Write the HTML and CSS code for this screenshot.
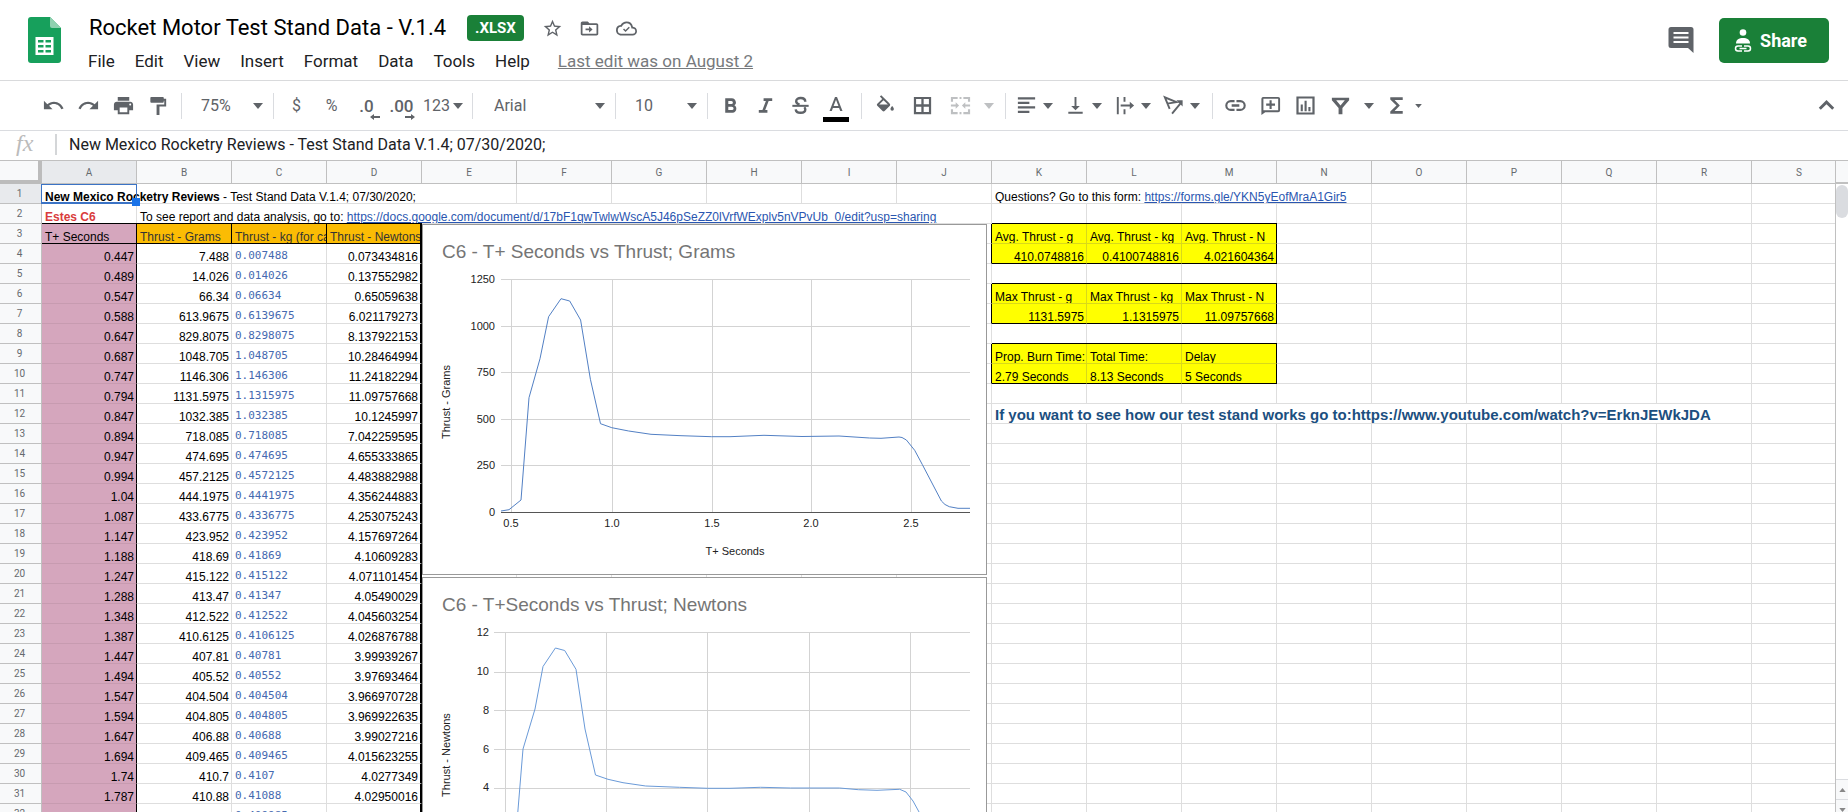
FILE: index.html
```html
<!DOCTYPE html>
<html lang="en">
<head>
<meta charset="utf-8">
<title>Rocket Motor Test Stand Data - V.1.4</title>
<link rel="stylesheet" href="styles.css">
</head>
<body>
<svg class="defs" aria-hidden="true">
  <symbol id="caret" viewBox="0 0 10 6"><path d="M0 0h10L5 6z"/></symbol>
</svg>
<header class="top">
  <svg class="logo" viewBox="0 0 33 46" aria-label="Sheets"><path fill="#17a05c" d="M3 0h19l11 11v32a3 3 0 0 1-3 3H3a3 3 0 0 1-3-3V3a3 3 0 0 1 3-3z"/><path fill="#8fd1b0" d="M22 0l11 11H24a2 2 0 0 1-2-2z"/><path fill="#fff" fill-rule="evenodd" d="M7.500 20h18v18h-18zM10 23v2.500h5.500V23zm7.500 0v2.500H23V23zM10 28v2.500h5.500V28zm7.500 0v2.500H23V28zM10 33v2.500h5.500V33zm7.500 0v2.500H23V33z"/></svg>
  <div class="doc">
    <div class="title-row">
      <h1 class="title">Rocket Motor Test Stand Data - V.1.4</h1>
      <span class="badge">.XLSX</span>
      <button class="mini" aria-label="Star"><svg viewBox="0 0 24 24"><path d="M22 9.240l-7.190-.620L12 2 9.190 8.630 2 9.240l5.460 4.730L5.820 21 12 17.270 18.180 21l-1.630-7.030zM12 15.400l-3.760 2.270 1-4.280-3.320-2.880 4.380-.380L12 6.100l1.710 4.040 4.380.380-3.320 2.880 1 4.280z"/></svg></button>
      <button class="mini" aria-label="Move"><svg viewBox="0 0 24 24"><path d="M20 6h-8l-2-2H4c-1.100 0-2 .9-2 2v12c0 1.100.9 2 2 2h16c1.100 0 2-.9 2-2V8c0-1.100-.9-2-2-2zm0 12H4V8h16zM11.500 9.500l4 3.500-4 3.500v-2.600H7.500v-1.800h4z"/></svg></button>
      <button class="mini" aria-label="Saved"><svg viewBox="0 0 24 24"><path d="M19.350 10.040A7.490 7.490 0 0 0 12 4C9.110 4 6.600 5.640 5.350 8.040A5.994 5.994 0 0 0 0 14c0 3.310 2.690 6 6 6h13c2.760 0 5-2.240 5-5 0-2.640-2.050-4.780-4.650-4.960zM19 18H6a4 4 0 0 1-.4-7.970l1.070-.110.500-.950A5.469 5.469 0 0 1 12 6c2.620 0 4.880 1.860 5.390 4.430l.3 1.500 1.530.110A2.980 2.980 0 0 1 19 18zM10.900 13.700l-1.700-1.700-1.200 1.200 2.900 2.900 4.900-4.900-1.200-1.200z"/></svg></button>
    </div>
    <nav class="menus">
      <button>File</button><button>Edit</button><button>View</button><button>Insert</button><button>Format</button><button>Data</button><button>Tools</button><button>Help</button>
      <a class="last-edit" href="#">Last edit was on August 2</a>
    </nav>
  </div>
  <button class="comments" aria-label="Comments"><svg viewBox="0 0 26 26"><path fill-rule="evenodd" d="M3 0h20a2.500 2.500 0 0 1 2.500 2.500V26L20 21H3a2.500 2.500 0 0 1-2.500-2.500v-16A2.500 2.500 0 0 1 3 0zm2.500 5v2h15V5zm0 4.500v2h15v-2zm0 4.500v2h15v-2z"/></svg></button>
  <button class="share"><svg viewBox="0 0 18 23"><circle cx="9" cy="3.500" r="3.300"/><path d="M2 14.500c0-4 3-5.500 7-5.500s7 1.500 7 5.500z"/><path fill="none" stroke="#fff" stroke-width="1.500" d="M8 17H4a2.500 2.500 0 0 0 0 5h4M10 17h4a2.500 2.500 0 0 1 0 5h-4M5.500 19.500h7"/></svg>Share</button>
</header>

<div class="toolbar">
  <button class="tool" aria-label="Undo"><svg viewBox="0 0 24 24"><path d="M12.500 8c-2.650 0-5.050.99-6.900 2.600L2 7v9h9l-3.620-3.620c1.390-1.160 3.160-1.880 5.120-1.880 3.540 0 6.550 2.310 7.600 5.500l2.370-.780C21.080 11.030 17.150 8 12.500 8z"/></svg></button>
  <button class="tool" aria-label="Redo"><svg viewBox="0 0 24 24"><path d="M11.500 8c2.650 0 5.050.99 6.900 2.600L22 7v9h-9l3.620-3.620c-1.390-1.160-3.160-1.880-5.120-1.880-3.540 0-6.550 2.310-7.600 5.500l-2.370-.780C2.920 11.030 6.850 8 11.500 8z"/></svg></button>
  <button class="tool" aria-label="Print"><svg viewBox="0 0 24 24"><path d="M19 8H5c-1.660 0-3 1.340-3 3v6h4v4h12v-4h4v-6c0-1.660-1.340-3-3-3zm-3 11H8v-5h8v5zm3-7c-.55 0-1-.45-1-1s.45-1 1-1 1 .45 1 1-.45 1-1 1zm-1-9H6v4h12V3z"/></svg></button>
  <button class="tool" aria-label="Paint format"><svg viewBox="0 0 24 24"><path d="M4.500 3h12a1 1 0 0 1 1 1v1H20v8h-7v9h-3V11h8V7h-.5v1a1 1 0 0 1-1 1h-12a1 1 0 0 1-1-1V4a1 1 0 0 1 1-1z"/></svg></button>
  <span class="sep"></span>
  <label class="pick pick-short"><select aria-label="Zoom"><option>75%</option></select><svg class="caret"><use href="#caret"/></svg></label>
  <span class="sep"></span>
  <button class="tool text">$</button>
  <button class="tool text">%</button>
  <button class="tool text dec" aria-label="Decrease decimal places"><b>.0</b><svg viewBox="0 0 10 6"><path d="M0 3l4-3v2h6v2H4v2z"/></svg></button>
  <button class="tool text dec" aria-label="Increase decimal places"><b>.00</b><svg viewBox="0 0 10 6"><path d="M10 3L6 0v2H0v2h6v2z"/></svg></button>
  <button class="tool text formats">123<svg class="caret"><use href="#caret"/></svg></button>
  <span class="sep"></span>
  <label class="pick pick-long"><select aria-label="Font"><option>Arial</option></select><svg class="caret"><use href="#caret"/></svg></label>
  <span class="sep"></span>
  <label class="pick pick-short"><select aria-label="Font size"><option>10</option></select><svg class="caret"><use href="#caret"/></svg></label>
  <span class="sep"></span>
  <button class="tool" aria-label="Bold"><svg viewBox="0 0 24 24"><path d="M16 11.790c1-.7 1.700-1.800 1.700-2.790C17.700 6.500 15.800 4.500 13.300 4.500H6.500v15h7.600c2.300 0 4-1.900 4-4.200 0-1.600-.9-2.900-2.100-3.510zM9.700 7.200h3.200a1.600 1.600 0 0 1 0 3.200H9.700zm3.700 9.600H9.700v-3.600h3.700a1.800 1.800 0 0 1 0 3.600z"/></svg></button>
  <button class="tool" aria-label="Italic"><svg viewBox="0 0 24 24"><path d="M10 4.500v2.700h2.400l-3.600 9.600H5v2.700h9v-2.700h-2.300l3.600-9.600H19V4.500z"/></svg></button>
  <button class="tool" aria-label="Strikethrough"><svg viewBox="0 0 24 24"><path fill="none" stroke="#5f6368" stroke-width="2.500" d="M17 8c0-5-9.500-5-9.500-.5 0 2 1.500 3 3.500 3.700M7 16c.5 5 10 4.500 10 .2 0-1-.5-1.900-1-2.400"/><path d="M3.500 11.300h17v2.100h-17z"/></svg></button>
  <button class="tool color" aria-label="Text color"><svg viewBox="0 0 24 24"><path d="M11 5L5.500 19h2.300l1.100-3h6.200l1.100 3h2.300L13 5zm-1.400 9L12 7.700l2.400 6.300z"/></svg><i class="swatch"></i></button>
  <span class="sep sep-late"></span>
  <button class="tool" aria-label="Fill color"><svg viewBox="0 0 24 24"><path d="M16.600 9.200L8.600 1.300 7.200 2.700l2.400 2.400-5.100 5.100c-.6.600-.6 1.500 0 2.100l5.500 5.500c.6.600 1.500.6 2.100 0l5.500-5.500c.3-.3.300-.8.300-1.500zM6.500 11L11 6.500l4.500 4.500zM20 12.500s-1.800 2-1.800 3.200a1.800 1.800 0 0 0 3.600 0c0-1.200-1.800-3.200-1.800-3.200z"/></svg></button>
  <button class="tool tool-wide" aria-label="Borders"><svg viewBox="0 0 24 24"><path fill-rule="evenodd" d="M3 3h18v18H3zm2.300 2.300v5.500h5.500V5.300zm7.900 0v5.500h5.500V5.300zM5.300 13.200v5.500h5.500v-5.500zm7.900 0v5.500h5.500v-5.500z"/></svg></button>
  <button class="tool off" aria-label="Merge cells"><svg viewBox="0 0 24 24"><path d="M2 3h7v2.200H4.200V8H2zm13 0h7v5h-2.200V5.200H15zM2 16h2.200v2.800H9V21H2zm17.800 0H22v5h-7v-2.200h4.800zM11 3h2v2.200h-2zm0 15.800h2V21h-2zM2 11h5V8.500l3.500 3.500L7 15.500V13H2zm20 0h-5V8.500L13.500 12l3.500 3.500V13h5z"/></svg></button>
  <button class="drop drop-mid off" aria-label="Merge options"><svg class="caret"><use href="#caret"/></svg></button>
  <span class="sep"></span>
  <button class="split" aria-label="Horizontal align"><svg viewBox="0 0 24 24"><path d="M3 3.500h18v2.300H3zm0 4.700h12v2.300H3zm0 4.700h18v2.300H3zm0 4.700h12v2.300H3z"/></svg><svg class="caret"><use href="#caret"/></svg></button>
  <button class="split" aria-label="Vertical align"><svg viewBox="0 0 24 24"><path d="M11 3h2v9.500h3.500L12 17l-4.500-4.500H11zM4.500 18.500h15v2.200h-15z"/></svg><svg class="caret"><use href="#caret"/></svg></button>
  <button class="split" aria-label="Text wrapping"><svg viewBox="0 0 24 24"><path d="M4 3h2v18H4zm7 0h2v5h-2zm0 13h2v5h-2zM8 11h9.500V8l4.500 4-4.500 4v-3H8z"/></svg><svg class="caret"><use href="#caret"/></svg></button>
  <button class="split" aria-label="Text rotation"><svg viewBox="0 0 24 24"><path fill="none" stroke="#5f6368" stroke-width="2" d="M8 15.500L3 3.500l12 5L5.500 10M10.500 20.500L20 9"/><path d="M15 6.500h6.500V13z"/></svg><svg class="caret"><use href="#caret"/></svg></button>
  <span class="sep"></span>
  <button class="tool" aria-label="Insert link"><svg viewBox="0 0 24 24"><path d="M3.500 12A3.500 3.500 0 0 1 7 8.500h4V6.300H7a5.700 5.700 0 0 0 0 11.400h4v-2.200H7A3.500 3.500 0 0 1 3.500 12zM8 13.200h8v-2.400H8zM17 6.300h-4v2.200h4a3.500 3.500 0 0 1 0 7h-4v2.200h4a5.700 5.700 0 0 0 0-11.400z"/></svg></button>
  <button class="tool" aria-label="Insert comment"><svg viewBox="0 0 24 24"><path fill-rule="evenodd" d="M4 3h16a2 2 0 0 1 2 2v12a2 2 0 0 1-2 2H6.500L2.500 22V5A2 2 0 0 1 4 3zm.6 2v12H20V5zM11 6.500h2.200V10h3.500v2.200h-3.500v3.500H11v-3.500H7.500V10H11z"/></svg></button>
  <button class="tool" aria-label="Insert chart"><svg viewBox="0 0 24 24"><path fill-rule="evenodd" d="M2.500 2.500h19v19h-19zm2.300 2.300v14.400h14.400V4.800zM7 11h2.200v7H7zm4-4h2.200v11H11zm4 6.500h2.200V18H15z"/></svg></button>
  <button class="tool" aria-label="Filter"><svg viewBox="0 0 24 24"><path fill-rule="evenodd" d="M3 4h18v2.400L14 14.500V21h-4v-6.500L3 6.400zm4.500 2.500L12 12l4.500-5.500z"/></svg></button>
  <button class="drop drop-mid" aria-label="Filter views"><svg class="caret"><use href="#caret"/></svg></button>
  <button class="tool tool-slim" aria-label="Functions"><svg viewBox="0 0 24 24"><path d="M18.500 3.500H5.500v2.200L12 12l-6.500 6.300v2.200h13v-2.800H10L15.500 12 10 6.300h8.500z"/></svg></button>
  <button class="drop" aria-label="More functions"><svg class="caret caret-small"><use href="#caret"/></svg></button>
  <button class="tool collapse" aria-label="Hide the menus"><svg viewBox="0 0 24 24"><path fill="none" stroke="#5f6368" stroke-width="3" d="M5 15.500l7-7 7 7"/></svg></button>
</div>

<div class="formula">
  <span class="fx">fx</span>
  <input class="formula-input" aria-label="Formula" value="New Mexico Rocketry Reviews - Test Stand Data V.1.4; 07/30/2020;">
</div>

<main class="sheet">
  <div class="grid">
    <table>
      <colgroup><col class="num"><col span="19"></colgroup>
      <thead><tr><th class="corner"></th><th class="sel">A</th><th>B</th><th>C</th><th>D</th><th>E</th><th>F</th><th>G</th><th>H</th><th>I</th><th>J</th><th>K</th><th>L</th><th>M</th><th>N</th><th>O</th><th>P</th><th>Q</th><th>R</th><th>S</th></tr></thead>
      <tbody class="plain">
        <tr><th class="sel">1</th><td colspan="5"><b>New Mexico Rocketry Reviews</b> - Test Stand Data V.1.4; 07/30/2020;</td><td class="blank" colspan="5"></td><td colspan="4">Questions? Go to this form: <a href="#">https://forms.gle/YKN5yEofMraA1Gir5</a></td><td class="blank" colspan="5"></td></tr>
        <tr><th>2</th><td class="engine">Estes C6</td><td colspan="9">To see report and data analysis, go to: <a href="#">https://docs.google.com/document/d/17bF1qwTwlwWscA5J46pSeZZ0lVrfWExplv5nVPvUb_0/edit?usp=sharing</a></td><td class="blank" colspan="9"></td></tr>
      </tbody>
      <tbody class="data">
        <tr class="heads"><th>3</th><td>T+ Seconds</td><td>Thrust - Grams</td><td>Thrust - kg (for calc)</td><td>Thrust - Newtons</td><td class="blank edge" colspan="6"></td><td class="y t">Avg. Thrust - g</td><td class="y t">Avg. Thrust - kg</td><td class="y t r">Avg. Thrust - N</td><td class="blank" colspan="6"></td></tr>
        <tr><th>4</th><td>0.447</td><td>7.488</td><td>0.007488</td><td>0.073434816</td><td class="blank edge" colspan="6"></td><td class="y n b">410.0748816</td><td class="y n b">0.4100748816</td><td class="y n b r">4.021604364</td><td class="blank" colspan="6"></td></tr>
        <tr><th>5</th><td>0.489</td><td>14.026</td><td>0.014026</td><td>0.137552982</td><td class="blank" colspan="15"></td></tr>
        <tr><th>6</th><td>0.547</td><td>66.34</td><td>0.06634</td><td>0.65059638</td><td class="blank edge" colspan="6"></td><td class="y t">Max Thrust - g</td><td class="y t">Max Thrust - kg</td><td class="y t r">Max Thrust - N</td><td class="blank" colspan="6"></td></tr>
        <tr><th>7</th><td>0.588</td><td>613.9675</td><td>0.6139675</td><td>6.021179273</td><td class="blank edge" colspan="6"></td><td class="y n b">1131.5975</td><td class="y n b">1.1315975</td><td class="y n b r">11.09757668</td><td class="blank" colspan="6"></td></tr>
        <tr><th>8</th><td>0.647</td><td>829.8075</td><td>0.8298075</td><td>8.137922153</td><td class="blank" colspan="15"></td></tr>
        <tr><th>9</th><td>0.687</td><td>1048.705</td><td>1.048705</td><td>10.28464994</td><td class="blank edge" colspan="6"></td><td class="y t">Prop. Burn Time:</td><td class="y t">Total Time:</td><td class="y t r">Delay</td><td class="blank" colspan="6"></td></tr>
        <tr><th>10</th><td>0.747</td><td>1146.306</td><td>1.146306</td><td>11.24182294</td><td class="blank edge" colspan="6"></td><td class="y b">2.79 Seconds</td><td class="y b">8.13 Seconds</td><td class="y b r">5 Seconds</td><td class="blank" colspan="6"></td></tr>
        <tr><th>11</th><td>0.794</td><td>1131.5975</td><td>1.1315975</td><td>11.09757668</td><td class="blank" colspan="15"></td></tr>
        <tr><th>12</th><td>0.847</td><td>1032.385</td><td>1.032385</td><td>10.1245997</td><td class="blank" colspan="6"></td><td class="note" colspan="8">If you want to see how our test stand works go to:https://www.youtube.com/watch?v=ErknJEWkJDA</td><td class="blank"></td></tr>
        <tr><th>13</th><td>0.894</td><td>718.085</td><td>0.718085</td><td>7.042259595</td><td class="blank" colspan="15"></td></tr>
        <tr><th>14</th><td>0.947</td><td>474.695</td><td>0.474695</td><td>4.655333865</td><td class="blank" colspan="15"></td></tr>
        <tr><th>15</th><td>0.994</td><td>457.2125</td><td>0.4572125</td><td>4.483882988</td><td class="blank" colspan="15"></td></tr>
        <tr><th>16</th><td>1.04</td><td>444.1975</td><td>0.4441975</td><td>4.356244883</td><td class="blank" colspan="15"></td></tr>
        <tr><th>17</th><td>1.087</td><td>433.6775</td><td>0.4336775</td><td>4.253075243</td><td class="blank" colspan="15"></td></tr>
        <tr><th>18</th><td>1.147</td><td>423.952</td><td>0.423952</td><td>4.157697264</td><td class="blank" colspan="15"></td></tr>
        <tr><th>19</th><td>1.188</td><td>418.69</td><td>0.41869</td><td>4.10609283</td><td class="blank" colspan="15"></td></tr>
        <tr><th>20</th><td>1.247</td><td>415.122</td><td>0.415122</td><td>4.071101454</td><td class="blank" colspan="15"></td></tr>
        <tr><th>21</th><td>1.288</td><td>413.47</td><td>0.41347</td><td>4.05490029</td><td class="blank" colspan="15"></td></tr>
        <tr><th>22</th><td>1.348</td><td>412.522</td><td>0.412522</td><td>4.045603254</td><td class="blank" colspan="15"></td></tr>
        <tr><th>23</th><td>1.387</td><td>410.6125</td><td>0.4106125</td><td>4.026876788</td><td class="blank" colspan="15"></td></tr>
        <tr><th>24</th><td>1.447</td><td>407.81</td><td>0.40781</td><td>3.99939267</td><td class="blank" colspan="15"></td></tr>
        <tr><th>25</th><td>1.494</td><td>405.52</td><td>0.40552</td><td>3.97693464</td><td class="blank" colspan="15"></td></tr>
        <tr><th>26</th><td>1.547</td><td>404.504</td><td>0.404504</td><td>3.966970728</td><td class="blank" colspan="15"></td></tr>
        <tr><th>27</th><td>1.594</td><td>404.805</td><td>0.404805</td><td>3.969922635</td><td class="blank" colspan="15"></td></tr>
        <tr><th>28</th><td>1.647</td><td>406.88</td><td>0.40688</td><td>3.99027216</td><td class="blank" colspan="15"></td></tr>
        <tr><th>29</th><td>1.694</td><td>409.465</td><td>0.409465</td><td>4.015623255</td><td class="blank" colspan="15"></td></tr>
        <tr><th>30</th><td>1.74</td><td>410.7</td><td>0.4107</td><td>4.0277349</td><td class="blank" colspan="15"></td></tr>
        <tr><th>31</th><td>1.787</td><td>410.88</td><td>0.41088</td><td>4.02950016</td><td class="blank" colspan="15"></td></tr>
        <tr><th>32</th><td></td><td></td><td>0.409985</td><td></td><td class="blank" colspan="15"></td></tr>
      </tbody>
    </table>
    <div class="cursor"></div>
    <div class="charts">
      <svg class="chart" viewBox="0 0 563 349">
        <path class="lines" d="M78 54.500h469M78 101.500h469M78 147.500h469M78 194.500h469M78 240.500h469M88.500 54v233M189.500 54v233M289.500 54v233M388.500 54v233M488.500 54v233"/>
        <path class="base" d="M78 287.500h469"/>
        <path class="curve curve-g" d="M78 286L86 284.700 98 275 106 172.700 117 133.700 125.600 91.700 138 73.700 146.700 76 157.600 95 167.400 154.300 177.500 198.700 188.800 202.700 205.700 206 228 209.300 258 210.700 288.500 211.700 307 211.700 341 210.300 379 211.500 416 211 446.600 213 458 213.300 476 212 479 212.500 483.400 215 491.700 225.300 499.200 239.300 518.400 276 522 279.500 526.300 281.700 535 283.300 547 283.300"/>
        <text class="chart-title" x="19" y="33">C6 - T+ Seconds vs Thrust; Grams</text>
        <g class="ends"><text x="72" y="58">1250</text><text x="72" y="105">1000</text><text x="72" y="151">750</text><text x="72" y="198">500</text><text x="72" y="244">250</text><text x="72" y="291">0</text></g>
        <g class="mids"><text x="88" y="302">0.5</text><text x="189" y="302">1.0</text><text x="289" y="302">1.5</text><text x="388" y="302">2.0</text><text x="488" y="302">2.5</text><text x="312" y="330">T+ Seconds</text><text transform="translate(27 177) rotate(-90)">Thrust - Grams</text></g>
      </svg>
      <svg class="chart" viewBox="0 0 563 349">
        <path class="lines" d="M71 54.500h476M71 94.500h476M71 132.500h476M71 171.500h476M71 210.500h476M71 249.500h476M82.500 54v233M183.500 54v233M284.500 54v233M386.500 54v233M487.500 54v233"/>
        <path class="base" d="M71 287.500h476"/>
        <path class="curve curve-n" d="M71 286L80 284.500 91.500 274.500 100 171 112 131 120 88.500 132.400 70 141.700 72.500 153 91.300 162 151 172.500 197 185 201.300 200 204.700 222.700 208 256.500 209.300 284.800 210.300 307 210.300 337.500 209.300 367.500 210 416.500 210 435.300 211.700 454 212.300 476.700 211.300 483 214 490 223 496.600 235 517 276 525 281.700 535 283 547 283"/>
        <text class="chart-title" x="19" y="33">C6 - T+Seconds vs Thrust; Newtons</text>
        <g class="ends"><text x="66" y="58">12</text><text x="66" y="97">10</text><text x="66" y="136">8</text><text x="66" y="175">6</text><text x="66" y="213">4</text></g>
        <g class="mids"><text transform="translate(27 177) rotate(-90)">Thrust - Newtons</text></g>
      </svg>
    </div>
  </div>
  <div class="scroll">
    <div class="scroll-head"></div>
    <div class="thumb"></div>
    <button class="arrow" aria-label="Scroll up"><svg viewBox="0 0 8 5"><path d="M0 5h8L4 0z"/></svg></button>
    <button class="arrow" aria-label="Scroll down"><svg viewBox="0 0 8 5"><path d="M0 0h8L4 5z"/></svg></button>
  </div>
</main>
</body>
</html>
```

FILE: styles.css
```css
* { box-sizing: border-box; }
body {
  margin: 0;
  height: 100vh;
  overflow: hidden;
  display: flex;
  flex-direction: column;
  background: #fff;
  color: #000;
  font-family: Roboto, "Liberation Sans", sans-serif;
}
button { border: 0; padding: 0; background: none; font: inherit; color: inherit; cursor: pointer; }
svg { fill: #5f6368; }
.defs { display: none; }

/* Title bar */
.top { flex: none; display: flex; align-items: center; height: 81px; padding: 0 19px 0 28px; border-bottom: 1px solid #d9dadc; }
.logo { width: 33px; height: 46px; }
.doc { flex: 1; padding: 8px 0 0 17px; }
.title-row { display: flex; align-items: center; height: 34px; padding-left: 11px; }
.title { margin: 0 21px 0 0; font-size: 22px; font-weight: 400; line-height: 28px; }
.badge { margin-right: 10px; padding: 0 8px; border-radius: 4px; background: #1a8038; color: #fff; font-size: 15px; font-weight: 700; line-height: 26px; }
.mini { display: flex; justify-content: center; width: 37px; }
.mini svg { width: 21px; height: 21px; }
.menus { display: flex; align-items: center; height: 32px; color: #202124; font-size: 17px; line-height: 24px; }
.menus button { padding: 0 10px; }
.last-edit { margin-left: 18px; color: #777a7d; }
.comments { display: flex; margin-right: 25px; }
.comments svg { width: 26px; height: 26px; }
.share { display: flex; align-items: center; gap: 8px; height: 45px; padding: 0 22px 0 15px; border-radius: 5px; background: #1a8038; color: #fff; font-size: 18px; font-weight: 700; }
.share svg { width: 18px; height: 23px; fill: #fff; }

/* Toolbar */
.toolbar { flex: none; display: flex; align-items: center; height: 50px; padding: 0 4px 0 36px; border-bottom: 1px solid #dadce0; color: #5f6368; font-size: 16px; }
.tool, .drop, .split { flex: none; display: flex; align-items: center; justify-content: center; height: 32px; }
.tool { width: 35px; }
.tool svg, .split svg { width: 23px; height: 23px; }
.tool-wide { width: 41px; }
.tool-slim { width: 32px; }
.drop { width: 12px; }
.drop-mid { width: 22px; }
.split { width: 49px; padding-right: 3px; gap: 5px; }
.off { opacity: 0.4; }
.toolbar .caret { width: 10px; height: 6px; }
.toolbar .caret-small { width: 7px; height: 4px; }
.sep { flex: none; width: 1px; height: 26px; margin: 0 5px; background: #dadce0; }
.sep-late { margin-left: 8px; }
.pick { flex: none; display: flex; align-items: center; padding-right: 5px; }
.pick select { flex: 1; min-width: 0; height: 32px; border: 0; padding: 0 0 0 14px; appearance: none; background: none; color: inherit; font: inherit; }
.pick-short { width: 81px; }
.pick-long { width: 132px; }
.pick-long select { padding-left: 16px; }
.dec { position: relative; }
.dec b { font-size: 17px; font-weight: 500; }
.toolbar .dec svg { position: absolute; right: 4px; bottom: 2px; width: 10px; height: 6px; }
.formats { width: 48px; gap: 3px; }
.color { position: relative; }
.swatch { position: absolute; left: 5px; bottom: 0; width: 26px; height: 5px; background: #000; }
.color svg { padding-bottom: 4px; width: 28px; height: 28px; }
.collapse { margin-left: auto; }

/* Formula bar */
.formula { flex: none; display: flex; align-items: center; height: 29px; padding-bottom: 3px; }
.fx { width: 57px; height: 21px; padding-left: 16px; border-right: 2px solid #d4d6d8; color: #bbb; font: italic 24px/18px "Liberation Serif", serif; }
.formula-input { flex: 1; height: 26px; border: 0; padding: 0 0 0 12px; outline: 0; color: #202124; font: 16px/24px Roboto, sans-serif; }

/* Spreadsheet grid */
.sheet { flex: 1; min-height: 0; display: flex; }
.grid { flex: 1; min-width: 0; position: relative; overflow: hidden; border-top: 1px solid #c0c0c0; border-right: 1px solid #c0c0c0; }
table { width: 1847px; table-layout: fixed; border-collapse: separate; border-spacing: 0; font: 12px/11px "Liberation Sans", sans-serif; }
.num { width: 42px; }
th { height: 20px; padding: 0 2px 0 0; border: 0 solid #c0c0c0; border-width: 0 1px 1px 0; background: #f8f9fa; color: #666a6e; font: 10px/13px Roboto, sans-serif; }
thead th { height: 23px; padding: 0; }
thead .corner { border: solid #bcbcbc; border-width: 0 4px 4px 0; }
.sel { background: #e8eaed; }
td { height: 20px; padding: 0 2px 0 3px; border: 0 solid #dedede; border-width: 0 1px 1px 0; overflow: hidden; white-space: nowrap; vertical-align: bottom; }
td a { color: #2a56b0; }
.blank { background: linear-gradient(to right, transparent 94px, #dedede 94px) 0 0 / 95px 100%; }
.edge { border-right-color: #000; }
.engine { color: #d93c3c; font-weight: 700; }
.data td:nth-child(2) { background: #d5a6bd; border-right-color: #000; border-bottom-color: #c79bb0; text-align: right; }
.data td:nth-child(3), .data td:nth-child(5) { text-align: right; }
.data td:nth-child(4) { padding-bottom: 1px; color: #4569b0; font: 11px/13px "DejaVu Sans Mono", monospace; }
.data td:nth-child(5) { border-right: 2px solid #000; }
.data .heads td:nth-child(-n+5) { border-color: #000; box-shadow: 0 -1px #000; text-align: left; }
.data .heads td:nth-child(n+3):nth-child(-n+5) { padding-right: 0; padding-bottom: 0; background: #fbbc04; color: #333; font: 12px/11px "Liberation Sans", sans-serif; }
.y { background: #ff0; border-color: #d9d91a; }
.n { text-align: right; }
.t { box-shadow: 0 -1px #000; }
.b { border-bottom-color: #000; }
.r { border-right-color: #000; }
.note { color: #1c4f80; font: bold 15px/17px "Liberation Sans", sans-serif; }
.cursor { position: absolute; left: 41px; top: 23px; width: 96px; height: 20px; border: 2px solid #3b73c5; border-width: 1px 1px 2px 1px; }
.cursor::after { content: ""; position: absolute; right: -4px; bottom: -4px; width: 8px; height: 8px; background: #1a73e8; }

/* Charts floating over the cells */
.charts { position: absolute; left: 422px; top: 63px; display: grid; gap: 2px; }
.chart { display: block; width: 565px; height: 351px; border: 1px solid #999; background: #fff; font: 11px "Liberation Sans", sans-serif; }
.chart text { fill: #222; }
.chart .chart-title { fill: #757575; font-size: 19px; }
.ends { text-anchor: end; }
.mids { text-anchor: middle; }
.lines { fill: none; stroke: #d3d3d3; }
.base { stroke: #555; }
.curve { fill: none; }
.curve-g { stroke: #5280c4; }
.curve-n { stroke: #6a9ad8; }

/* Vertical scroll bar */
.scroll { flex: none; width: 12px; display: flex; flex-direction: column; }
.scroll-head { height: 24px; border: solid #c0c0c0; border-width: 1px 0 2px; background: #f8f9fa; }
.thumb { height: 33px; margin: 1px 0 auto; border-radius: 6px; background: #dadce0; }
.arrow { display: flex; align-items: center; justify-content: center; height: 20px; border-top: 1px solid #dadce0; background: #f8f9fa; }
.arrow:last-child { height: 13px; align-items: flex-end; }
.arrow svg { width: 7px; height: 4px; fill: #888; }
```
